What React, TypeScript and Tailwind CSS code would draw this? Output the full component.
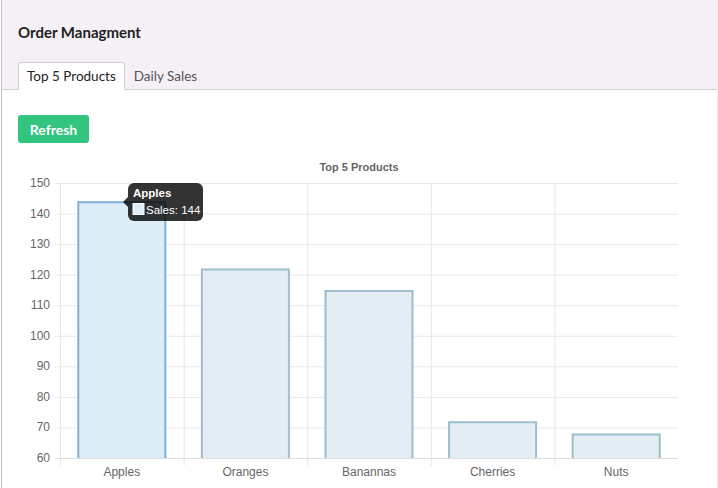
import React from 'react';

interface Product {
  name: string;
  sales: number;
}

const products: Product[] = [
  { name: 'Apples', sales: 144 },
  { name: 'Oranges', sales: 122 },
  { name: 'Banannas', sales: 115 },
  { name: 'Cherries', sales: 72 },
  { name: 'Nuts', sales: 68 },
];

// chart geometry (page coords, svg uses viewBox to match)
const left = 60;
const right = 678;
const top = 183;
const bottom = 458;
const min = 60;
const max = 150;
const yOf = (v: number) => bottom - ((v - min) * (bottom - top)) / (max - min);
const slot = (right - left) / products.length;

const BarChart: React.FC = () => {
  const ticks = [150, 140, 130, 120, 110, 100, 90, 80, 70, 60];
  return (
    <svg width={682} height={330} viewBox="18 155 682 330" className="block" style={{ fontFamily: '"Liberation Sans", Arial, sans-serif' }}>
      <text x={359} y={171} textAnchor="middle" fontSize={11} fontWeight={700} fill="#666">
        Top 5 Products
      </text>

      {/* horizontal grid */}
      {ticks.map(t => (
        <g key={t}>
          <line x1={55} x2={right} y1={yOf(t) + 0.5} y2={yOf(t) + 0.5} stroke="#e8e8e8" strokeWidth={1} />
          <text x={50} y={yOf(t) + 4} textAnchor="end" fontSize={12} fill="#666">
            {t}
          </text>
        </g>
      ))}

      {/* vertical grid */}
      {products.map((p, i) => (
        <line key={p.name} x1={left + i * slot + 0.5} x2={left + i * slot + 0.5} y1={top} y2={466} stroke="#e8e8e8" strokeWidth={1} />
      ))}
      <line x1={55} x2={right} y1={bottom + 0.5} y2={bottom + 0.5} stroke="#dedede" strokeWidth={1} />

      {/* bars */}
      {products.map((p, i) => {
        const w = slot * 0.72;
        const x = left + i * slot + (slot - w) / 2;
        const y = yOf(p.sales);
        const hovered = i === 0;
        return (
          <g key={p.name}>
            <rect x={x} y={y} width={w} height={bottom - y} fill={hovered ? '#ddedf7' : '#e5edf4'} />
            <path
              d={`M${x + 1} ${bottom} V${y + 1} H${x + w - 1} V${bottom}`}
              fill="none"
              stroke={hovered ? '#7fb2d5' : '#9fbfce'}
              strokeWidth={2}
            />
            <text x={x + w / 2} y={476} textAnchor="middle" fontSize={12} fill="#666">
              {p.name}
            </text>
          </g>
        );
      })}

      {/* tooltip */}
      <path d="M123 202 L128 197 L128 207 Z" fill="rgba(0,0,0,0.8)" />
      <rect x={128} y={183} width={75} height={38} rx={6} fill="rgba(0,0,0,0.8)" />
      <text x={133} y={197} fontSize={11.5} fontWeight={700} fill="#fff">
        Apples
      </text>
      <rect x={133} y={203.5} width={11} height={11} fill="#ddedf7" stroke="#fff" strokeWidth={1} />
      <text x={146} y={214} fontSize={11.5} fill="#fff">
        Sales: 144
      </text>
    </svg>
  );
};

const App: React.FC = () => {
  return (
    <div className="w-[718px] h-[488px] bg-white overflow-hidden font-['Lato',sans-serif]">
      <div className="ml-px h-full border-l border-[#c4c4c4] border-r border-r-[#eeeeee] flex flex-col">
        <div className="bg-[#f5f0f6] h-[90px] border-b border-[#cfcfcf] flex flex-col justify-end pl-[16px]">
          <h1 className="text-[15px] font-bold text-[#222] leading-none mb-[22px]">Order Managment</h1>
          <div className="flex items-end -mb-px">
            <button className="h-[28px] px-[8px] bg-white border border-[#cfcfcf] border-b-white rounded-t-[3px] text-[13.5px] text-[#222]">
              Top 5 Products
            </button>
            <button className="h-[28px] px-[9px] text-[13.5px] text-[#555]">Daily Sales</button>
          </div>
        </div>

        <div className="pl-[16px] pt-[25px]">
          <button className="w-[71px] h-[28px] rounded-[3px] bg-[#31c580] text-white text-[14px] font-bold">
            Refresh
          </button>
        </div>

        <div className="pl-[16px] pt-[12px]">
          <BarChart />
        </div>
      </div>
    </div>
  );
};

export default App;
